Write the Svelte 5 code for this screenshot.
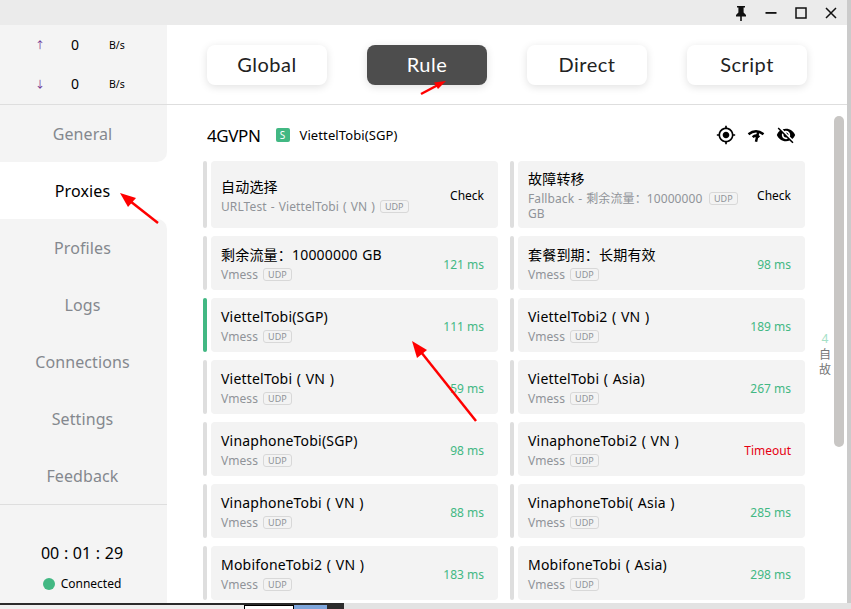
<script>
	const navs = ['General', 'Proxies', 'Profiles', 'Logs', 'Connections', 'Settings', 'Feedback'];
	const modes = ['Global', 'Rule', 'Direct', 'Script'];
	const active = 1;
	const proxies = [
		{ name: '自动选择', sub: 'URLTest - ViettelTobi ( VN )', right: 'Check', kind: 'check' },
		{ name: '故障转移', sub: 'Fallback - 剩余流量：10000000 GB', right: 'Check', kind: 'check' },
		{ name: '剩余流量：10000000 GB', sub: 'Vmess', right: '121 ms' },
		{ name: '套餐到期：长期有效', sub: 'Vmess', right: '98 ms' },
		{ name: 'ViettelTobi(SGP)', sub: 'Vmess', right: '111 ms', selected: true },
		{ name: 'ViettelTobi2 ( VN )', sub: 'Vmess', right: '189 ms' },
		{ name: 'ViettelTobi ( VN )', sub: 'Vmess', right: '59 ms' },
		{ name: 'ViettelTobi ( Asia)', sub: 'Vmess', right: '267 ms' },
		{ name: 'VinaphoneTobi(SGP)', sub: 'Vmess', right: '98 ms' },
		{ name: 'VinaphoneTobi2 ( VN )', sub: 'Vmess', right: 'Timeout', kind: 'bad' },
		{ name: 'VinaphoneTobi ( VN )', sub: 'Vmess', right: '88 ms' },
		{ name: 'VinaphoneTobi( Asia )', sub: 'Vmess', right: '285 ms' },
		{ name: 'MobifoneTobi2 ( VN )', sub: 'Vmess', right: '183 ms' },
		{ name: 'MobifoneTobi ( Asia)', sub: 'Vmess', right: '298 ms' }
	];
</script>

<div class="screen">
	<div class="window">
		<header class="titlebar">
			<svg class="winicon" viewBox="0 0 14 16"><path d="M3 1h8v1.5H9.6v5L12 10v1.5H7.8V16H6.2v-4.500H2V10l2.400-2.500v-5H3z" /></svg>
			<svg class="winicon" viewBox="0 0 14 16"><rect x="1.500" y="7" width="11" height="1.800" /></svg>
			<svg class="winicon" viewBox="0 0 14 16"><rect x="2" y="3" width="10" height="10" fill="none" stroke="#111" stroke-width="1.500" /></svg>
			<svg class="winicon" viewBox="0 0 14 16"><path d="M2 3l10 10M12 3L2 13" stroke="#111" stroke-width="1.500" fill="none" /></svg>
		</header>

		<div class="body">
			<aside class="sidebar">
				<div class="stats">
					<div class="stat"><span class="arrow">↑</span><span class="num">0</span><span class="unit">B/s</span></div>
					<div class="stat"><span class="arrow">↓</span><span class="num">0</span><span class="unit">B/s</span></div>
				</div>
				<nav>
					{#each navs as nav, i}
						<div class="nav" class:on={i === active} class:before={i === active - 1} class:after={i === active + 1}>{nav}</div>
					{/each}
				</nav>
				<div class="foot">
					<div class="time">00 : 01 : 29</div>
					<div class="status"><span class="dot"></span>Connected</div>
				</div>
			</aside>

			<main>
				<div class="modes">
					{#each modes as mode}
						<div class="mode" class:sel={mode === 'Rule'}>{mode}</div>
					{/each}
				</div>

				<section class="content">
					<div class="group">
						<span class="gname">4GVPN</span>
						<span class="badge">S</span>
						<span class="gnow">ViettelTobi(SGP)</span>
						<div class="tools">
							<svg viewBox="0 0 24 24"><path d="M12 8c-2.210 0-4 1.790-4 4s1.790 4 4 4 4-1.790 4-4-1.790-4-4-4zm8.940 3c-.460-4.170-3.770-7.480-7.940-7.940V1h-2v2.060C6.830 3.520 3.520 6.830 3.060 11H1v2h2.060c.460 4.170 3.770 7.480 7.940 7.940V23h2v-2.060c4.170-.460 7.480-3.770 7.940-7.940H23v-2h-2.060zM12 19c-3.870 0-7-3.130-7-7s3.130-7 7-7 7 3.130 7 7-3.130 7-7 7z" /></svg>
							<svg viewBox="0 0 24 24"><path d="M3 11Q12 4 21 11M8 14.500Q12 11 16 14.500M15 7L12 20" fill="none" stroke="#000" stroke-width="3" /></svg>
							<svg viewBox="0 0 24 24"><path d="M12 7c2.760 0 5 2.240 5 5 0 .650-.130 1.260-.360 1.830l2.920 2.920c1.510-1.260 2.700-2.890 3.430-4.750-1.730-4.390-6-7.500-11-7.500-1.400 0-2.740.250-3.980.700l2.160 2.160C10.740 7.130 11.350 7 12 7zM2 4.270l2.280 2.280.460.460C3.080 8.300 1.780 10.020 1 12c1.730 4.390 6 7.500 11 7.500 1.550 0 3.030-.300 4.380-.840l.420.420L19.730 22 21 20.730 3.270 3 2 4.270zM7.530 9.800l1.550 1.550c-.050.210-.080.430-.080.650 0 1.660 1.340 3 3 3 .220 0 .440-.030.650-.080l1.550 1.550c-.670.330-1.410.530-2.200.530-2.760 0-5-2.240-5-5 0-.790.200-1.530.530-2.200zm4.310-.780l3.150 3.150.020-.160c0-1.660-1.340-3-3-3l-.170.010z" /></svg>
						</div>
					</div>

					<div class="grid">
						{#each proxies as p}
							<div class="item">
								<span class="bar" class:cur={p.selected}></span>
								<div class="card">
									<div class="info">
										<div class="name">{p.name}</div>
										<div class="sub"><span class="subtext">{p.sub}</span><span class="udp">UDP</span></div>
									</div>
									<span class="delay" class:check={p.kind === 'check'} class:bad={p.kind === 'bad'}>{p.right}</span>
								</div>
							</div>
						{/each}
					</div>
				</section>

				<div class="index">
					<span class="idx-num">4</span>
					<span>自</span>
					<span>故</span>
				</div>
				<div class="thumb"></div>
			</main>
		</div>
	</div>

	<div class="under">
		<div class="taskbar">
			<span class="u-a"></span><span class="u-b"></span><span class="u-c"></span><span class="u-d"></span>
		</div>
	</div>

	<svg class="marks" width="851" height="609" viewBox="0 0 851 609">
		<path d="M421 94L437 85.500" stroke="#f00" stroke-width="2.500" />
		<path d="M446 81L434 82.500L438 89z" fill="#f00" />
		<path d="M158 223L130 201" stroke="#f00" stroke-width="2.500" />
		<path d="M120 193L136 198L128 207z" fill="#f00" />
		<path d="M476 421L421 352" stroke="#f00" stroke-width="2.500" />
		<path d="M412 341L427 350L417 358z" fill="#f00" />
	</svg>
</div>

<style>
	:global(body) {
		margin: 0;
		background: #fff;
	}

	.screen {
		position: relative;
		width: 851px;
		height: 609px;
		overflow: hidden;
		background: #cbcbcb;
		font-family: "Noto Sans", "Noto Sans CJK SC", sans-serif;
		color: #000;
	}

	.window {
		width: 847px;
		height: 603px;
		background: #fff;
		display: flex;
		flex-direction: column;
	}

	.titlebar {
		height: 25px;
		flex: none;
		background: #ebebeb;
		display: flex;
		justify-content: flex-end;
		align-items: center;
		gap: 16px;
		padding-right: 9px;
		box-sizing: border-box;
	}

	.winicon {
		width: 14px;
		height: 16px;
		fill: #111;
	}

	.body {
		flex: 1;
		display: flex;
		min-height: 0;
	}

	.sidebar {
		width: 167px;
		flex: none;
		display: flex;
		flex-direction: column;
		background: #fff;
	}

	.stats {
		height: 80px;
		flex: none;
		box-sizing: border-box;
		background: #f4f4f4;
		border-bottom: 1px solid #dedede;
	}

	.stat {
		height: 39px;
		display: grid;
		grid-template-columns: 66px 18px 1fr;
		align-items: center;
		justify-items: center;
	}

	.arrow {
		justify-self: end;
		margin-right: 21px;
		font-size: 10px;
		color: #6b2a8f;
	}

	.num {
		font-size: 14px;
	}

	.unit {
		font-size: 10.500px;
		justify-self: start;
		margin-left: 25px;
	}

	nav {
		display: flex;
		flex-direction: column;
	}

	.nav {
		height: 57px;
		box-sizing: border-box;
		padding-right: 2px;
		background: #f4f4f4;
		color: #84888e;
		font-size: 16px;
		letter-spacing: 0.1px;
		display: flex;
		align-items: center;
		justify-content: center;
	}

	.nav.on {
		background: #fff;
		color: #000;
	}

	.nav.before {
		border-bottom-right-radius: 10px;
	}

	.nav.after {
		border-top-right-radius: 10px;
	}

	.foot {
		flex: 1;
		background: #f4f4f4;
		border-top: 1px solid #dedede;
		display: flex;
		flex-direction: column;
		align-items: center;
		padding: 36px 3px 0 0;
		box-sizing: border-box;
	}

	.time {
		font-size: 16px;
		line-height: 24px;
		word-spacing: 0.5px;
	}

	.status {
		display: flex;
		align-items: center;
		gap: 6px;
		font-size: 12px;
		margin-top: 10px;
	}

	.dot {
		width: 12px;
		height: 12px;
		border-radius: 50%;
		background: #42b883;
	}

	main {
		position: relative;
		flex: 1;
		min-width: 0;
		overflow: hidden;
	}

	.modes {
		height: 80px;
		box-sizing: border-box;
		border-bottom: 1px solid #dedede;
		display: flex;
		gap: 40px;
		padding: 20px 0 0 40px;
	}

	.mode {
		width: 120px;
		height: 40px;
		box-sizing: border-box;
		padding-bottom: 2px;
		border-radius: 8px;
		background: #fff;
		box-shadow: 0 2px 8px rgba(0, 0, 0, 0.12);
		display: flex;
		align-items: center;
		justify-content: center;
		font-family: Lato, sans-serif;
		font-size: 20px;
		letter-spacing: 0.5px;
		color: #222;
	}

	.mode.sel {
		background: #4d4d4d;
		color: #fff;
	}

	.content {
		padding: 0 42px 0 36px;
	}

	.group {
		height: 56px;
		display: flex;
		align-items: center;
		padding: 4px 0 0 4px;
		box-sizing: border-box;
	}

	.gname {
		font-size: 17px;
		letter-spacing: -0.4px;
	}

	.badge {
		width: 14px;
		height: 14px;
		margin-left: 15px;
		border-radius: 2px;
		background: #42b883;
		color: #fff;
		font-size: 10px;
		line-height: 14px;
		text-align: center;
	}

	.gnow {
		font-size: 13px;
		letter-spacing: 0.1px;
		margin-left: 10px;
	}

	.tools {
		margin-left: auto;
		display: flex;
		gap: 10px;
		margin-right: 9px;
	}

	.tools svg {
		width: 20px;
		height: 20px;
	}

	.grid {
		display: grid;
		grid-template-columns: 295px 295px;
		gap: 8px 12px;
	}

	.item {
		display: flex;
		gap: 4px;
		min-height: 54px;
	}

	.bar {
		width: 4px;
		flex: none;
		border-radius: 2px;
		background: #dedede;
	}

	.bar.cur {
		background: #42b883;
	}

	.card {
		flex: 1;
		min-width: 0;
		box-sizing: border-box;
		border-radius: 4px;
		background: #f3f3f3;
		padding: 8px 14px 7px 10px;
		display: flex;
		align-items: center;
		justify-content: space-between;
		gap: 8px;
	}

	.info {
		min-width: 0;
	}

	.name {
		font-size: 14px;
		line-height: 20px;
		letter-spacing: 0.2px;
		word-spacing: 0.7px;
	}

	.sub {
		display: flex;
		align-items: flex-start;
		font-size: 12px;
		line-height: 15px;
		margin-top: 2px;
		color: #909399;
		letter-spacing: 0.1px;
		word-spacing: 0.8px;
	}

	.subtext {
		min-width: 0;
		max-width: 176px;
	}

	.udp {
		flex: none;
		margin: 1px 0 0 5px;
		padding: 0 4px;
		border: 1px solid #d8d8d8;
		border-radius: 3px;
		font-size: 9px;
		line-height: 11px;
		letter-spacing: 0;
	}

	.delay {
		flex: none;
		margin-top: 1px;
		font-size: 12px;
		color: #42b883;
	}

	.delay.check {
		color: #000;
	}

	.delay.bad {
		color: #e60012;
	}

	.index {
		position: absolute;
		left: 650px;
		top: 306px;
		width: 16px;
		display: flex;
		flex-direction: column;
		align-items: center;
		font-size: 12px;
		line-height: 15.500px;
		color: #777;
	}

	.index span {
		display: block;
		height: 15.500px;
	}

	.idx-num {
		color: #a4e0c6;
	}

	.thumb {
		position: absolute;
		left: 667px;
		top: 91px;
		width: 10px;
		height: 331px;
		border-radius: 5px;
		background: #c8c6c4;
	}

	.under {
		height: 6px;
		background: #e3e3e3;
	}

	.taskbar {
		width: 344px;
		height: 6px;
		box-sizing: border-box;
		border-top: 2px solid #2b2b2b;
		display: flex;
	}

	.taskbar span {
		display: block;
		height: 100%;
	}

	.u-a {
		width: 244px;
		background: #f0f0f0;
	}

	.u-b {
		width: 50px;
		background: #fff;
		border: 1px solid #000;
		border-bottom: 0;
		box-sizing: border-box;
	}

	.u-c {
		width: 33px;
		background: #7ea6dc;
	}

	.u-d {
		width: 17px;
		background: #2d2d2d;
	}

	.marks {
		position: absolute;
		left: 0;
		top: 0;
		pointer-events: none;
	}
</style>
